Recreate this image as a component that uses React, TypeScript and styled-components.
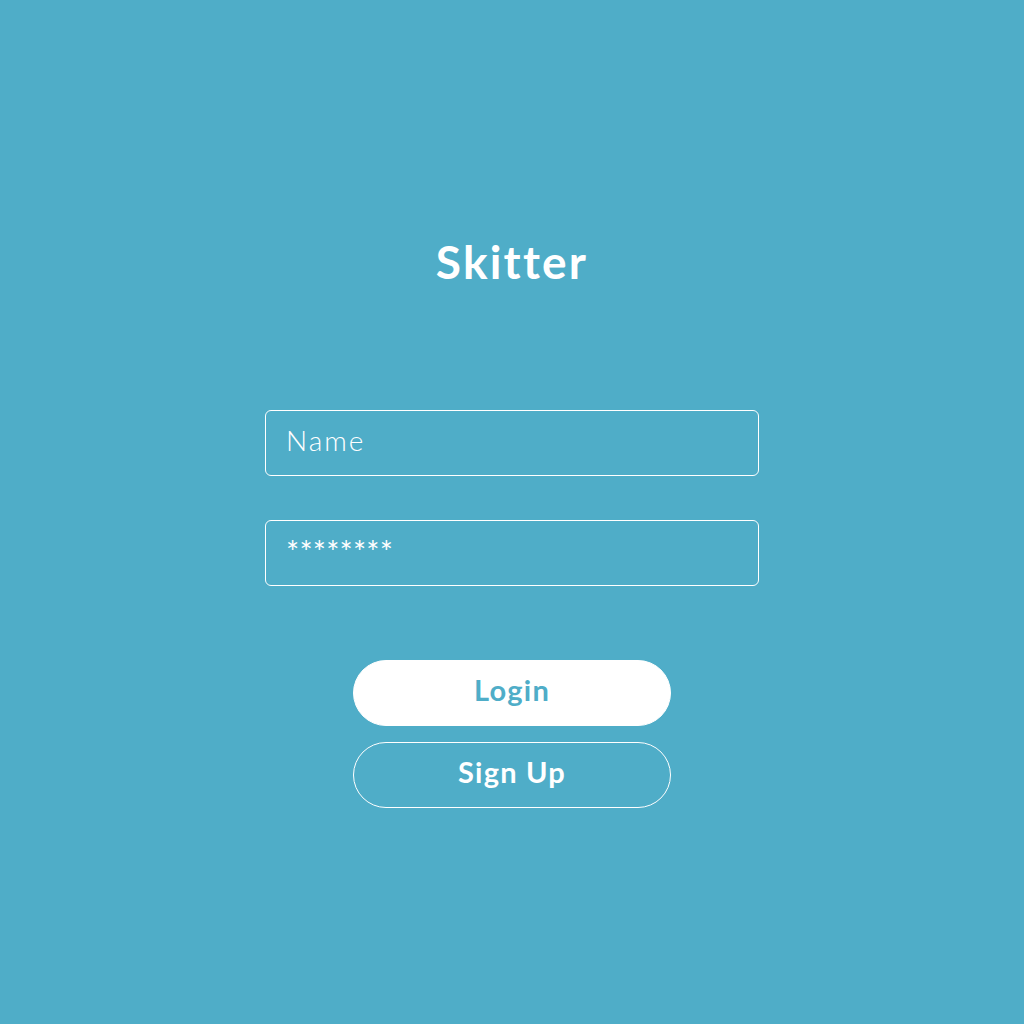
import React from "react";
import styled, { createGlobalStyle } from "styled-components";

const GlobalStyle = createGlobalStyle`
  html, body { margin: 0; padding: 0; background: #4fadc8; }
  * { box-sizing: border-box; }
  body { font-family: Lato, "Noto Sans", sans-serif; }
`;

const Page = styled.main`
  min-height: 100vh;
  display: flex;
  flex-direction: column;
  align-items: center;
  padding-top: 235px;
  background: #4fadc8;
`;

const Title = styled.h1`
  margin: 0;
  font-family: Lato, "Noto Sans", sans-serif;
  font-weight: 700;
  font-size: 46px;
  line-height: 54px;
  color: #ffffff;
  letter-spacing: 2.2px;
`;

const Form = styled.form`
  margin-top: 121px;
  display: flex;
  flex-direction: column;
  align-items: center;
`;

const Fields = styled.div`
  display: flex;
  flex-direction: column;
  gap: 44px;
`;

const Field = styled.input<{ $masked?: boolean }>`
  width: 494px;
  height: 66px;
  border: 1px solid #ffffff;
  border-radius: 6px;
  background: transparent;
  color: #ffffff;
  font-family: Lato, "Noto Sans", sans-serif;
  font-size: ${(p) => (p.$masked ? "31px" : "28px")};
  font-weight: ${(p) => (p.$masked ? 400 : 300)};
  letter-spacing: ${(p) => (p.$masked ? "0.2px" : "2px")};
  padding: 0 20px ${(p) => (p.$masked ? "4px" : "7px")} 20px;
  outline: none;
  &::placeholder { color: #ffffff; opacity: 1; }
`;

const Buttons = styled.div`
  margin-top: 74px;
  display: flex;
  flex-direction: column;
  gap: 16px;
`;

const Button = styled.button<{ $primary?: boolean }>`
  width: 318px;
  height: 66px;
  border-radius: 33px;
  border: 1px solid #ffffff;
  background: ${(p) => (p.$primary ? "#ffffff" : "transparent")};
  color: ${(p) => (p.$primary ? "#4fadc8" : "#ffffff")};
  font-family: Lato, "Noto Sans", sans-serif;
  font-size: 29px;
  font-weight: 700;
  letter-spacing: 1.2px;
  padding: 0 0 7px 0;
  cursor: pointer;
`;

export default function App() {
  return (
    <>
      <GlobalStyle />
      <Page>
        <Title>Skitter</Title>
        <Form onSubmit={(e) => e.preventDefault()}>
          <Fields>
            <Field placeholder="Name" />
            <Field $masked readOnly defaultValue="********" />
          </Fields>
          <Buttons>
            <Button $primary type="submit">Login</Button>
            <Button type="button">Sign Up</Button>
          </Buttons>
        </Form>
      </Page>
    </>
  );
}
